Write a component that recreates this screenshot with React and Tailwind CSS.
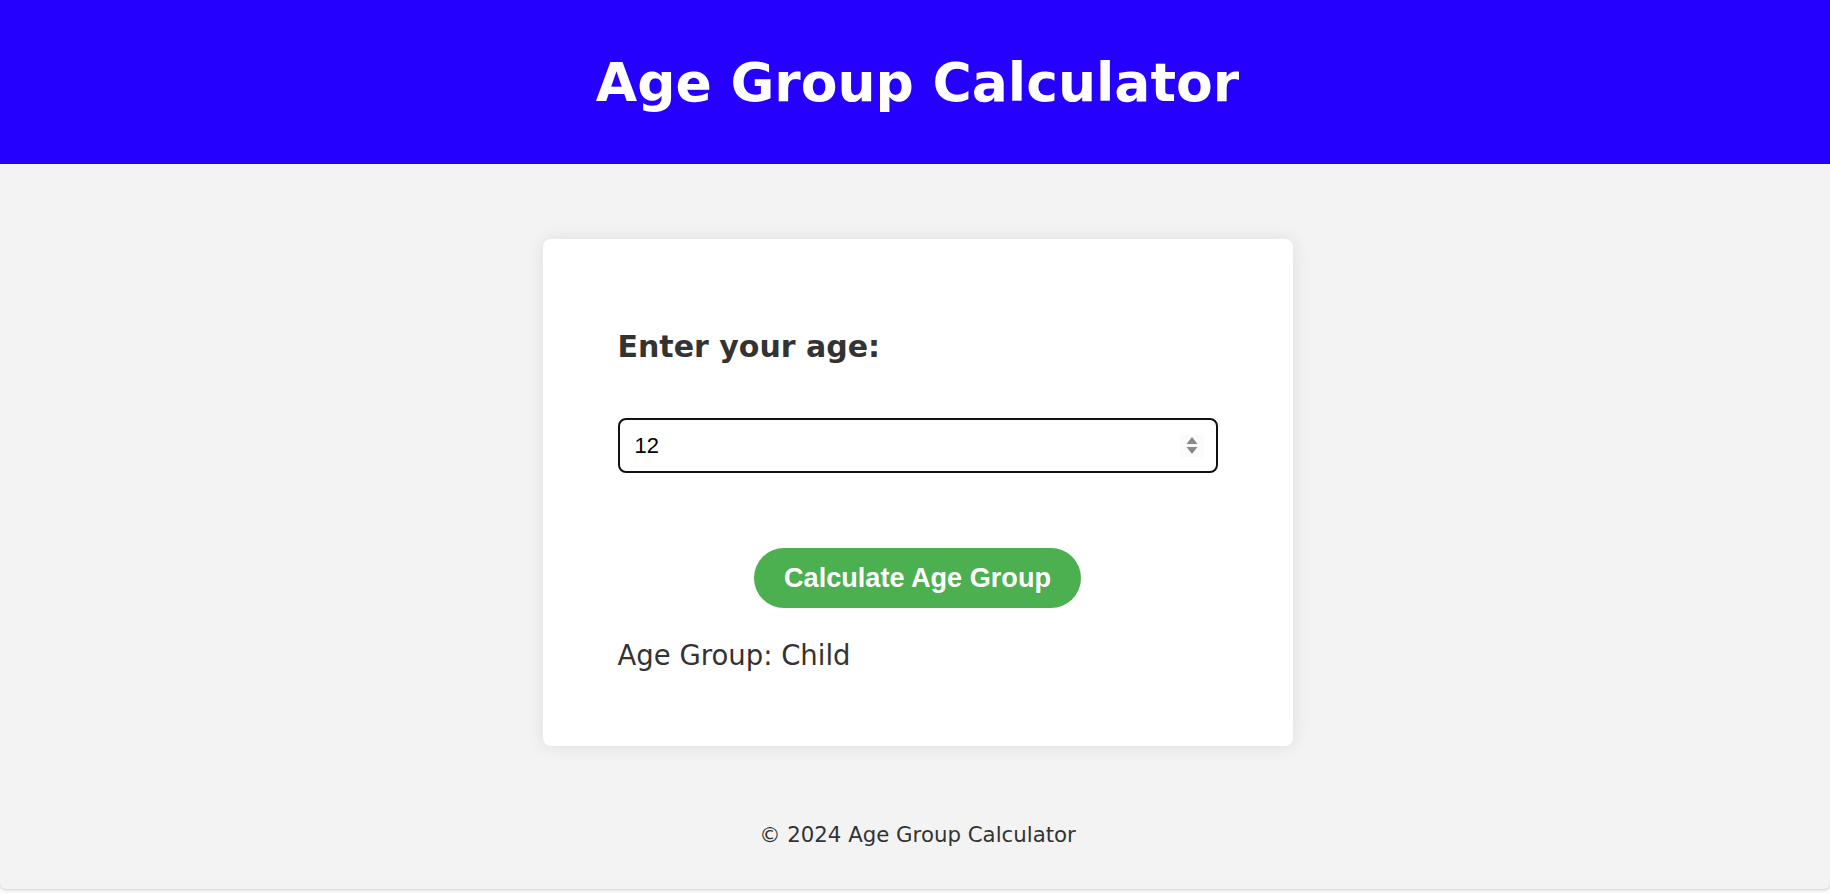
export default function App() {
  return (
    <div className="min-h-[894px] w-full bg-[#fafafa]">
      <div className="flex h-[889px] flex-col rounded-b-[6px] bg-[#f3f3f3] shadow-[0_1px_3px_rgba(0,0,0,0.18)]">
        <header className="flex h-[164px] items-start justify-center bg-[#2600ff] pl-[5px] pt-[52px]">
          <h1
            className="text-[53.5px] font-bold leading-[62px] text-white"
            style={{ fontFamily: '"DejaVu Sans", Verdana, sans-serif' }}
          >
            Age Group Calculator
          </h1>
        </header>
        <main className="flex justify-center pl-[5px] pt-[75px]">
          <div className="flex h-[507px] w-[750px] flex-col rounded-[8px] bg-white px-[75px] pt-[90px] shadow-[0_0_18px_rgba(0,0,0,0.09)]">
            <label
              className="text-[30px] font-bold leading-[35px] text-[#333333]"
              style={{ fontFamily: '"DejaVu Sans", Verdana, sans-serif' }}
            >
              Enter your age:
            </label>
            <div className="mt-[54px] flex h-[55px] w-[600px] items-center rounded-[8px] border-2 border-[#111111] bg-white pl-[15px] pr-[12px]">
              <input
                type="text"
                defaultValue="12"
                className="min-w-0 flex-1 bg-transparent text-[22px] text-black outline-none"
                style={{ fontFamily: '"Liberation Sans", Arial, sans-serif' }}
              />
              <div className="flex h-[22px] w-[24px] items-center justify-center bg-[#fafafa]">
                <svg width="12" height="19" viewBox="0 0 12 19">
                  <path d="M6 1 L11.5 8 L0.5 8 Z" fill="#888888" />
                  <path d="M0.5 11 L11.5 11 L6 18 Z" fill="#888888" />
                </svg>
              </div>
            </div>
            <div className="mt-[75px] flex justify-center">
              <button
                className="h-[60px] rounded-full bg-[#4caf50] px-[30px] text-[27.1px] font-bold leading-[30px] text-white"
                style={{ fontFamily: '"Liberation Sans", Arial, sans-serif' }}
              >
                Calculate Age Group
              </button>
            </div>
            <p
              className="mt-[32px] text-[27.5px] leading-[31px] text-[#333333]"
              style={{ fontFamily: '"DejaVu Sans", Verdana, sans-serif' }}
            >
              Age Group: Child
            </p>
          </div>
        </main>
        <footer
          className="mt-[76px] flex justify-center pl-[5px] text-[21.3px] leading-[25px] text-[#333333]"
          style={{ fontFamily: '"DejaVu Sans", Verdana, sans-serif' }}
        >
          © 2024 Age Group Calculator
        </footer>
      </div>
    </div>
  );
}
